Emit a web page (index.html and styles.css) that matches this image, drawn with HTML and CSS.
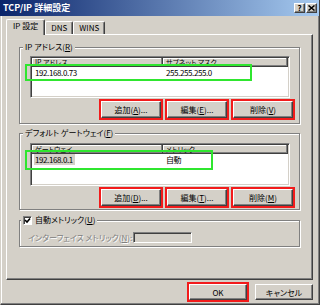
FILE: index.html
```html
<!DOCTYPE html>
<html lang="ja">
<head>
    <meta charset="UTF-8">
    <title>TCP/IP 詳細設定</title>
    <link rel="stylesheet" href="styles.css">
</head>
<body>
    <div class="dialog">
        <div class="titlebar">
            <span class="title">TCP/IP 詳細設定</span>
            <div class="caption-buttons">
                <span class="cap-btn">?</span>
                <span class="cap-btn">
                    <svg width="7" height="6" viewBox="0 0 7 6"><path d="M0.5 0.5L6.5 5.5M6.5 0.5L0.5 5.5" stroke="#000" stroke-width="1.5"/></svg>
                </span>
            </div>
        </div>

        <div class="content">
            <div class="tabs">
                <div class="tab active">IP 設定</div>
                <div class="tab">DNS</div>
                <div class="tab">WINS</div>
            </div>

            <div class="panel">
                <fieldset class="group">
                    <legend>IP アドレス(<u>R</u>)</legend>
                    <div class="listview">
                        <div class="lv-header">
                            <span class="col col-1">IP アドレス</span>
                            <span class="col col-2">サブネット マスク</span>
                        </div>
                        <div class="lv-row">
                            <span class="col col-1">192.168.0.73</span>
                            <span class="col col-2">255.255.255.0</span>
                        </div>
                        <div class="mark mark-ip"></div>
                    </div>
                    <div class="btn-row">
                        <button class="btn marked">追加(<u>A</u>)...</button>
                        <button class="btn marked">編集(<u>E</u>)...</button>
                        <button class="btn marked">削除(<u>V</u>)</button>
                    </div>
                </fieldset>

                <fieldset class="group group-gw">
                    <legend>デフォルト ゲートウェイ(<u>F</u>)</legend>
                    <div class="listview">
                        <div class="lv-header">
                            <span class="col col-1">ゲートウェイ</span>
                            <span class="col col-2">メトリック</span>
                        </div>
                        <div class="lv-row">
                            <span class="col col-1"><span class="selected">192.168.0.1</span></span>
                            <span class="col col-2">自動</span>
                        </div>
                        <div class="mark mark-gw"></div>
                    </div>
                    <div class="btn-row">
                        <button class="btn marked">追加(<u>D</u>)...</button>
                        <button class="btn marked">編集(<u>T</u>)...</button>
                        <button class="btn marked">削除(<u>M</u>)</button>
                    </div>
                </fieldset>

                <fieldset class="group group-metric">
                    <legend class="check-legend">
                        <span class="checkbox">
                            <svg width="7" height="7" viewBox="0 0 7 7"><path d="M1 3L3 5L6 1.5" fill="none" stroke="#000" stroke-width="1.6"/></svg>
                        </span>
                        <span>自動メトリック(<u>U</u>)</span>
                    </legend>
                    <div class="metric-row">
                        <span class="metric-label">インターフェイス メトリック(<u>N</u>):</span>
                        <span class="textbox"></span>
                    </div>
                </fieldset>
            </div>

            <div class="footer">
                <button class="btn btn-wide marked">OK</button>
                <button class="btn btn-wide">キャンセル</button>
            </div>
        </div>
    </div>
</body>
</html>
```

FILE: styles.css
```css
* {
    box-sizing: border-box;
}

html, body {
    margin: 0;
}

body {
    width: 320px;
    height: 305px;
    overflow: hidden;
    background: #d4d0c8;
    font: 8px/10px "Noto Sans CJK JP", sans-serif;
    font-feature-settings: "palt";
    color: #000;
}

u {
    text-decoration-thickness: 1px;
}

.dialog {
    width: 320px;
    height: 305px;
    display: flex;
    flex-direction: column;
    background: #d4d0c8;
    border-left: 1px solid #d4d0c8;
    border-right: 1px solid #404040;
    border-bottom: 1px solid #404040;
    box-shadow: inset -1px -1px #808080, inset 1px 0 #fff;
}

/* title bar */
.titlebar {
    height: 16px;
    flex: none;
    display: flex;
    align-items: center;
    justify-content: space-between;
    padding: 0 2px 0 3px;
    margin-left: -1px;
    background: linear-gradient(to right, #0a246a, #a6caf0);
}

.title {
    color: #fff;
    font-weight: bold;
    font-size: 9px;
    line-height: 12px;
}

.caption-buttons {
    display: flex;
    gap: 1px;
}

.cap-btn {
    width: 11px;
    height: 10px;
    display: flex;
    align-items: center;
    justify-content: center;
    background: #d4d0c8;
    border: 1px solid;
    border-color: #fff #404040 #404040 #fff;
    box-shadow: inset -1px -1px #808080;
    font-weight: bold;
    font-size: 8px;
    line-height: 8px;
}

/* tabs + panel */
.content {
    flex: 1;
    display: flex;
    flex-direction: column;
    padding: 3px 6px 0 5px;
}

.tabs {
    height: 15px;
    display: flex;
    align-items: flex-end;
}

.tab {
    height: 13px;
    padding: 0 5px;
    border: 1px solid;
    border-color: #fff #404040 transparent #fff;
    border-bottom: none;
    border-radius: 2px 2px 0 0;
    box-shadow: inset -1px 0 #808080;
    line-height: 11px;
}

.tab.active {
    height: 16px;
    padding: 0 6px;
    margin-bottom: -1px;
    position: relative;
    z-index: 1;
    background: #d4d0c8;
    line-height: 12px;
}

.panel {
    height: 246px;
    flex: none;
    display: flex;
    flex-direction: column;
    border: 1px solid;
    border-color: #fff #404040 #404040 #fff;
    box-shadow: inset -1px -1px #808080;
    padding: 7px 12px 0 12px;
}

/* group boxes */
.group {
    margin: 0;
    min-width: 0;
    padding: 4px 9px 5px 10px;
    border: 1px solid #808080;
    box-shadow: 1px 1px #fff, inset 1px 1px #fff;
}

.group legend {
    padding: 0 2px;
    margin-left: -7px;
    line-height: 10px;
    background: #d4d0c8;
}

.group legend.check-legend {
    display: flex;
    align-items: center;
    gap: 3px;
}

.group-gw {
    margin-top: 4px;
    padding-top: 5px;
    padding-bottom: 3px;
}

.group-metric {
    margin-top: 5px;
    padding: 7px 9px 3px 8px;
}

/* list views */
.listview {
    position: relative;
    height: 42px;
    background: #fff;
    border: 1px solid;
    border-color: #808080 #fff #fff #808080;
    box-shadow: inset 1px 1px #404040, inset -1px -1px #d4d0c8;
    padding: 1px;
}

.group-gw .listview {
    height: 43px;
}

.lv-header {
    display: flex;
    height: 9px;
}

.lv-header .col {
    background: #d4d0c8;
    border-right: 1px solid #404040;
    border-bottom: 1px solid #404040;
    box-shadow: inset -1px -1px #808080, inset 1px 1px #fff;
    font-size: 7px;
    line-height: 8px;
}

.lv-row {
    display: flex;
    height: 11px;
    line-height: 11px;
}

.col {
    padding-left: 3px;
    white-space: nowrap;
}

.col-1 {
    width: 131px;
    flex: none;
}

.col-2 {
    flex: 1;
}

.lv-row .col {
    letter-spacing: -0.4px;
}

.selected {
    background: #d4d0c8;
    padding: 0 2px 0 1px;
    margin-left: -1px;
}

/* annotation boxes */
.mark {
    position: absolute;
    border: 2px solid #2fe62f;
    pointer-events: none;
}

.mark-ip {
    left: -6px;
    top: 7px;
    width: 227px;
    height: 17px;
}

.mark-gw {
    left: -6px;
    top: 6px;
    width: 188px;
    height: 20px;
}

.marked {
    outline: 2px solid #f21b1b;
}

/* buttons */
.btn-row {
    display: flex;
    justify-content: flex-end;
    gap: 6px;
    margin-top: 3px;
    margin-right: -3px;
}

.btn {
    width: 60px;
    height: 17px;
    padding: 0;
    font: inherit;
    font-feature-settings: "palt";
    line-height: 14px;
    color: #000;
    background: #d4d0c8;
    border: 1px solid;
    border-color: #fff #404040 #404040 #fff;
    box-shadow: inset -1px -1px #808080;
}

.btn-wide {
    width: 58px;
    height: 16px;
    line-height: 13px;
}

.footer {
    display: flex;
    justify-content: flex-end;
    gap: 8px;
    margin-top: 4px;
}

/* auto metric */
.checkbox {
    width: 9px;
    height: 9px;
    display: inline-flex;
    align-items: center;
    justify-content: center;
    background: #fff;
    border: 1px solid;
    border-color: #808080 #fff #fff #808080;
    box-shadow: inset 1px 1px #404040;
}

.metric-row {
    display: flex;
    align-items: center;
}

.metric-label {
    width: 105px;
    color: #808080;
    text-shadow: 1px 1px #fff;
    white-space: nowrap;
}

.textbox {
    width: 59px;
    height: 11px;
    background: #d4d0c8;
    border: 1px solid;
    border-color: #808080 #fff #fff #808080;
    box-shadow: inset 1px 1px #404040;
}
```
